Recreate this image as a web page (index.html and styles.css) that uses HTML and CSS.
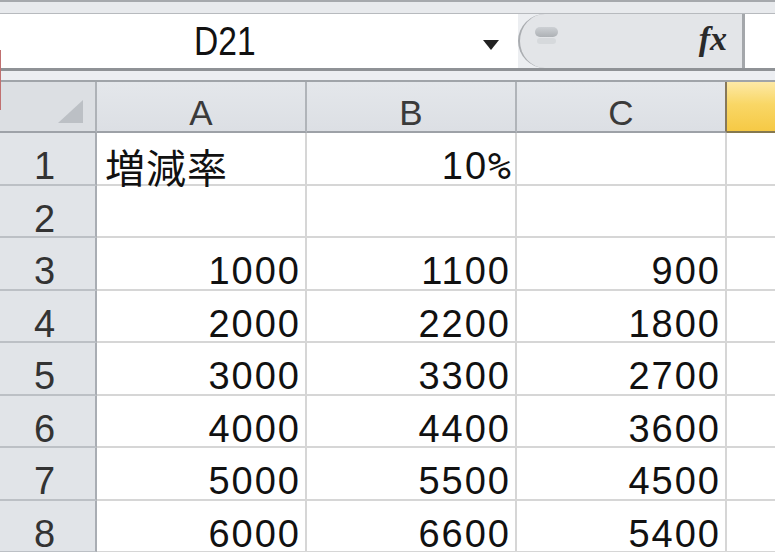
FILE: index.html
```html
<!DOCTYPE html>
<html lang="ja">
<head>
<meta charset="utf-8">
<title>Excel</title>
<link rel="stylesheet" href="styles.css">
</head>
<body>
<div class="top"></div>
<div class="fbar">
  <div class="namebox"><span class="name">D21</span><span class="arrow"></span></div>
  <div class="fxarea"><span class="knob"></span><span class="fx">fx</span></div>
  <div class="finput"></div>
</div>
<div class="gap"></div>
<div class="sheet">
  <div class="corner"><span class="tri"></span></div>
  <div class="ch">A</div><div class="ch">B</div><div class="ch last">C</div><div class="ch sel"></div>

  <div class="rh">1</div><div class="c cjk">増減率</div><div class="c num">10<span class="pct">%</span></div><div class="c"></div><div class="c"></div>
  <div class="rh">2</div><div class="c"></div><div class="c"></div><div class="c"></div><div class="c"></div>
  <div class="rh">3</div><div class="c num">1000</div><div class="c num">1100</div><div class="c num">900</div><div class="c"></div>
  <div class="rh">4</div><div class="c num">2000</div><div class="c num">2200</div><div class="c num">1800</div><div class="c"></div>
  <div class="rh">5</div><div class="c num">3000</div><div class="c num">3300</div><div class="c num">2700</div><div class="c"></div>
  <div class="rh">6</div><div class="c num">4000</div><div class="c num">4400</div><div class="c num">3600</div><div class="c"></div>
  <div class="rh">7</div><div class="c num">5000</div><div class="c num">5500</div><div class="c num">4500</div><div class="c"></div>
  <div class="rh">8</div><div class="c num">6000</div><div class="c num">6600</div><div class="c num">5400</div><div class="c"></div>
</div>
</body>
</html>
```
FILE: styles.css
```css
* { box-sizing: border-box; }
html, body { margin: 0; padding: 0; }
body {
  width: 775px;
  height: 552px;
  overflow: hidden;
  background: #eceef1;
  font-family: "Liberation Sans", "Noto Sans CJK JP", sans-serif;
  position: relative;
}
body::before {
  content: "";
  position: absolute;
  left: 0;
  top: 50px;
  width: 1px;
  height: 60px;
  background: #c07070;
}
.top {
  height: 13px;
  border-top: 2px solid #a6a9ad;
  background: #e8eaed;
}
.fbar {
  display: flex;
  height: 58px;
  border-top: 1px solid #b7babe;
  border-bottom: 3px solid #8f9296;
}
.namebox {
  width: 518px;
  background: #fff;
  display: flex;
  align-items: center;
}
.name {
  display: inline-block;
  margin-left: 194px;
  font-size: 40px;
  line-height: 40px;
  color: #111;
  transform: scaleX(0.84);
  transform-origin: left center;
}
.arrow {
  margin-left: auto;
  margin-right: 19px;
  margin-top: 7px;
  width: 0;
  height: 0;
  border-left: 8px solid transparent;
  border-right: 8px solid transparent;
  border-top: 10px solid #222;
}
.fxarea {
  width: 224px;
  background: #e3e5e8;
  border-left: 2px solid #aaadb1;
  border-radius: 28px 0 0 28px;
  display: flex;
  align-items: flex-start;
}
.knob {
  margin-left: 15px;
  margin-top: 13px;
  width: 23px;
  height: 10px;
  border-radius: 6px;
  background: linear-gradient(#cdd0d4, #adb1b5);
  box-shadow: 0 9px 0 -2px #d6d9dc;
}
.fx {
  margin-left: auto;
  margin-right: 15px;
  margin-top: 5px;
  font-family: "Liberation Serif", serif;
  font-style: italic;
  font-weight: bold;
  font-size: 34px;
  line-height: 40px;
  color: #2a2a2a;
}
.finput {
  flex: 1;
  background: #fff;
  border-left: 3px solid #a4a7ab;
}
.gap {
  height: 9px;
  background: #eceef2;
}
.sheet {
  display: grid;
  grid-template-columns: 97px 210px 210px 210px 1fr;
  grid-template-rows: 51px repeat(8, 52.5px);
  border-top: 2px solid #a0a4a9;
  background: #fff;
}
.corner {
  background: #dcdfe3;
  border-right: 2px solid #aeb2b7;
  border-bottom: 2px solid #9ea2a8;
  display: flex;
  justify-content: flex-end;
  align-items: flex-end;
  padding: 0 12px 8px 0;
}
.tri {
  width: 25px;
  height: 23px;
  background: #bcc0c5;
  clip-path: polygon(100% 0, 100% 100%, 0 100%);
}
.ch {
  background: linear-gradient(#e4e7eb, #dcdfe4);
  border-right: 2px solid #b0b4b9;
  border-bottom: 2px solid #9da1a7;
  text-align: center;
  font-size: 35px;
  line-height: 35px;
  padding-top: 13px;
  color: #3a3a3a;
}
.ch.last { border-right-color: #86785a; }
.ch.sel {
  background: linear-gradient(#fde9a6, #f9d766 45%, #f6c945);
  border-right: none;
  border-bottom-color: #85784f;
}
.rh {
  background: #e1e4e8;
  border-right: 2px solid #a9adb3;
  border-bottom: 2px solid #bcc0c5;
  text-align: center;
  padding-right: 6px;
  font-size: 38px;
  line-height: 38px;
  padding-top: 14px;
  color: #333;
}
.c {
  border-right: 2px solid #d6d6d6;
  border-bottom: 2px solid #d6d6d6;
  font-size: 38px;
  line-height: 38px;
  padding-top: 14px;
  color: #111;
  white-space: nowrap;
}
.c:nth-child(5n) { border-right: none; }
.num {
  text-align: right;
  padding-right: 4px;
  letter-spacing: 2px;
}
.cjk {
  font-family: "Noto Sans CJK JP", sans-serif;
  font-size: 40px;
  padding-left: 8px;
  letter-spacing: 1px;
}
.pct {
  font-family: "DejaVu Sans Mono", monospace;
  letter-spacing: 0;
}
```
